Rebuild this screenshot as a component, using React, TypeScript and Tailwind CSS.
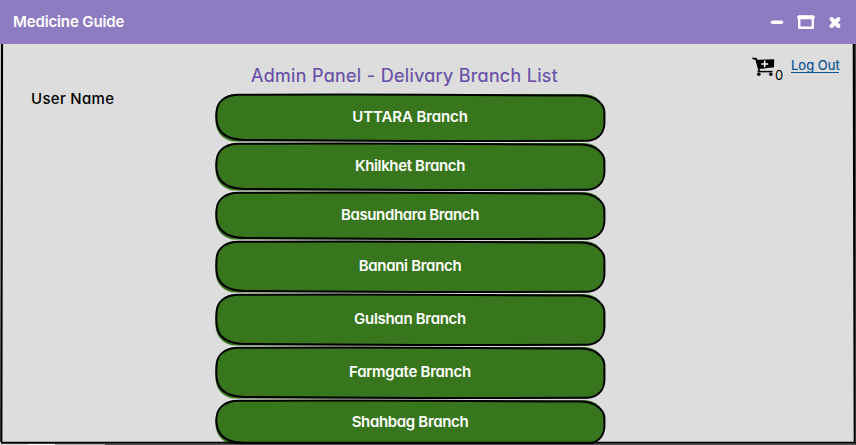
type Branch = { name: string; height: string; h: number; label: string };

const branches: Branch[] = [
  { name: "UTTARA Branch", height: "h-[49px]", h: 48, label: "tracking-[-0.1px]" },
  { name: "Khilkhet Branch", height: "h-[49px]", h: 48, label: "tracking-[-0.35px]" },
  { name: "Basundhara Branch", height: "h-[49px]", h: 48, label: "tracking-[-0.38px]" },
  { name: "Banani Branch", height: "h-[53px]", h: 52, label: "tracking-[-0.3px]" },
  { name: "Gulshan Branch", height: "h-[53px]", h: 52, label: "tracking-[-0.3px]" },
  { name: "Farmgate Branch", height: "h-[53px]", h: 52, label: "tracking-[-0.27px]" },
  { name: "Shahbag Branch", height: "h-[47px]", h: 45, label: "tracking-[-0.33px]" },
];

function SketchFrame({ h }: { h: number }) {
  const b = h;
  return (
    <svg className="absolute inset-0" width="392" height={h + 2} viewBox={`0 0 392 ${h + 2}`} fill="none">
      <rect x="0.5" y="1" width="389" height={h - 0.4} rx="20" fill="#38761d" />
      <path
        d={`M24 1.8 C90 1.3 150 1.5 215 1.7 C280 1.8 320 2.5 366 2.6 C381 3 389.2 11 389.4 19 V${b - 17} C388.6 ${b - 6} 381 ${b} 371 ${b - 0.2} C270 ${b + 0.5} 130 ${b} 30 ${b - 1} C14 ${b - 1.3} 4 ${b - 7} 2 ${b - 18} C.7 ${b - 24} 1.3 22 1.8 17 C3 7 12 2 24 1.8Z`}
        stroke="black"
        strokeWidth="2"
      />
    </svg>
  );
}

function Cart() {
  return (
    <svg width="24" height="21" viewBox="0 0 24 21" className="absolute left-[752px] top-[13px]">
      <path d="M0.5 1.3 4 1.8 7.5 14.6" fill="none" stroke="black" strokeWidth="1.7" />
      <path d="M4 2.6C9 3 16 2 22.2 2.2L22 10.5C17 10 12 12 6.8 11.8Z" fill="black" />
      <path d="M5.5 14.6H20.5" stroke="black" strokeWidth="1.5" />
      <circle cx="6.8" cy="17.3" r="1.8" />
      <circle cx="18.8" cy="17.3" r="1.8" />
      <path d="M12.7 3.6V10.2M9.3 6.9H16.1" stroke="white" strokeWidth="1.5" />
    </svg>
  );
}

export default function App() {
  return (
    <div className="relative flex h-[445px] w-[856px] flex-col overflow-hidden bg-[#dddddd] font-['Inter',sans-serif] text-[15px] [font-feature-settings:'cv11'] antialiased">
      <header className="flex h-11 shrink-0 items-center justify-between bg-[#8e7cc3] pl-[13px] pr-[14px] text-white">
        <h1 className="text-[15px] font-semibold leading-5 tracking-[-0.13px]">Medicine Guide</h1>
        <svg width="74" height="18" viewBox="0 0 74 18" fill="none" stroke="white" strokeLinecap="round">
          <path d="M4.5 9.2H13.5" strokeWidth="3.5" />
          <path d="M31.2 4H44.8V14.8H31.2Z" strokeWidth="2.4" strokeLinejoin="round" />
          <path d="M31.2 4.2H44.8" strokeWidth="4" />
          <path d="M63.6 6 70.4 13M70.4 6 63.6 13" strokeWidth="4" />
        </svg>
      </header>
      <main className="relative grow">
        <Cart />
        <div className="flex h-[49px]">
          <h2 className="ml-[251px] mt-[21px] w-[500px] whitespace-nowrap text-[18px] leading-[22px] tracking-[0.3px] text-[#674ea7] [-webkit-text-stroke:0.2px_#674ea7]">
            Admin Panel - Delivary Branch List
          </h2>
          <div className="ml-[24px] mt-[22px] w-[16px] text-[13px] leading-[18px]">0</div>
          <a className="mt-[13px] h-[16px] w-[48px] whitespace-nowrap border-b border-[#0b5394] text-[13px] leading-[17px] text-[#0b5394] [-webkit-text-stroke:0.2px_#0b5394]">Log Out</a>
        </div>
        <div className="flex">
          <div className="w-[215px] shrink-0 pl-[31px] text-[15px] font-medium leading-[12px] tracking-[0.3px]">User Name</div>
          <div className="flex w-[392px] flex-col">
            {branches.map((b) => (
              <button key={b.name} className={`relative flex w-full shrink-0 items-center justify-center pb-0.5 text-white ${b.height}`}>
                <SketchFrame h={b.h} />
                <span className={`relative -left-px whitespace-nowrap text-[15px] font-semibold leading-5 ${b.label}`}>{b.name}</span>
              </button>
            ))}
          </div>
        </div>
      </main>
      <svg className="pointer-events-none absolute inset-0" width="856" height="445" viewBox="0 0 856 445" fill="none">
        <path d="M2 44C2.5 160 1.5 300 1.3 442 M853.8 44C854 200 854.5 290 854.8 442" stroke="black" strokeWidth="2.2" />
        <path d="M855.6 44V445" stroke="#333" />
        <path d="M1 442.8C250 443.2 600 442.6 856 442.8" stroke="black" strokeWidth="2" />
        <path d="M28 444.5H55" stroke="white" />
        <path d="M55 444.5H105" stroke="#aaa" />
        <path d="M105 444.5H856" stroke="#555" />
      </svg>
    </div>
  );
}
